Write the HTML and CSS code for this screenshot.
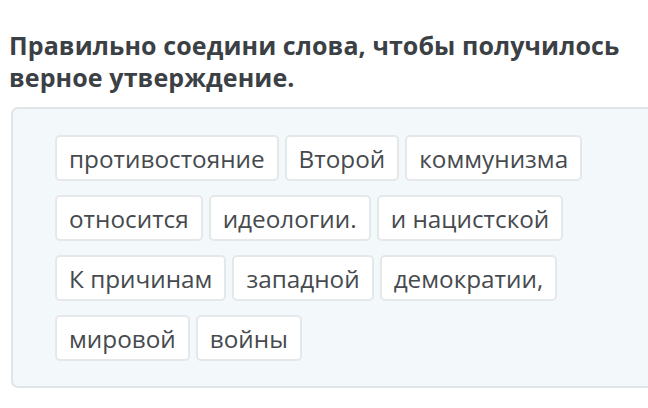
FILE: index.html
```html
<!DOCTYPE html>
<html lang="ru">
<head>
<meta charset="utf-8">
<link rel="stylesheet" href="styles.css">
</head>
<body>
<div class="page">
  <h1 class="title">Правильно соедини слова, чтобы получилось верное утверждение.</h1>
  <div class="board">
    <div class="chips">
      <span class="chip">противостояние</span>
      <span class="chip">Второй</span>
      <span class="chip">коммунизма</span>
      <span class="chip">относится</span>
      <span class="chip">идеологии.</span>
      <span class="chip">и нацистской</span>
      <span class="chip">К причинам</span>
      <span class="chip">западной</span>
      <span class="chip">демократии,</span>
      <span class="chip">мировой</span>
      <span class="chip">войны</span>
    </div>
  </div>
</div>
</body>
</html>
```
FILE: styles.css
```css
html, body {
  margin: 0;
  padding: 0;
  background: #ffffff;
  overflow: hidden;
}
.page {
  width: 720px;
  padding: 29px 0 0 9px;
  font-family: "Open Sans", "Noto Sans", sans-serif;
}
.title {
  margin: 0;
  width: 639px;
  font-size: 25px;
  font-weight: 700;
  line-height: 32px;
  letter-spacing: 0.1px;
  color: #3b4045;
}
.board {
  margin: 14px 0 0 2px;
  width: 700px;
  box-sizing: border-box;
  padding: 26px 42px 25px 42px;
  background: #f3f8fb;
  border: 2px solid #dfe5e9;
  border-radius: 7px;
}
.chips {
  display: flex;
  flex-wrap: wrap;
  gap: 14px 6px;
}
.chip {
  box-sizing: border-box;
  height: 46px;
  padding: 0 12px;
  display: flex;
  align-items: center;
  background: #ffffff;
  border: 2px solid #e4e8eb;
  border-radius: 5px;
  font-size: 24.3px;
  color: #464a4e;
}
```
